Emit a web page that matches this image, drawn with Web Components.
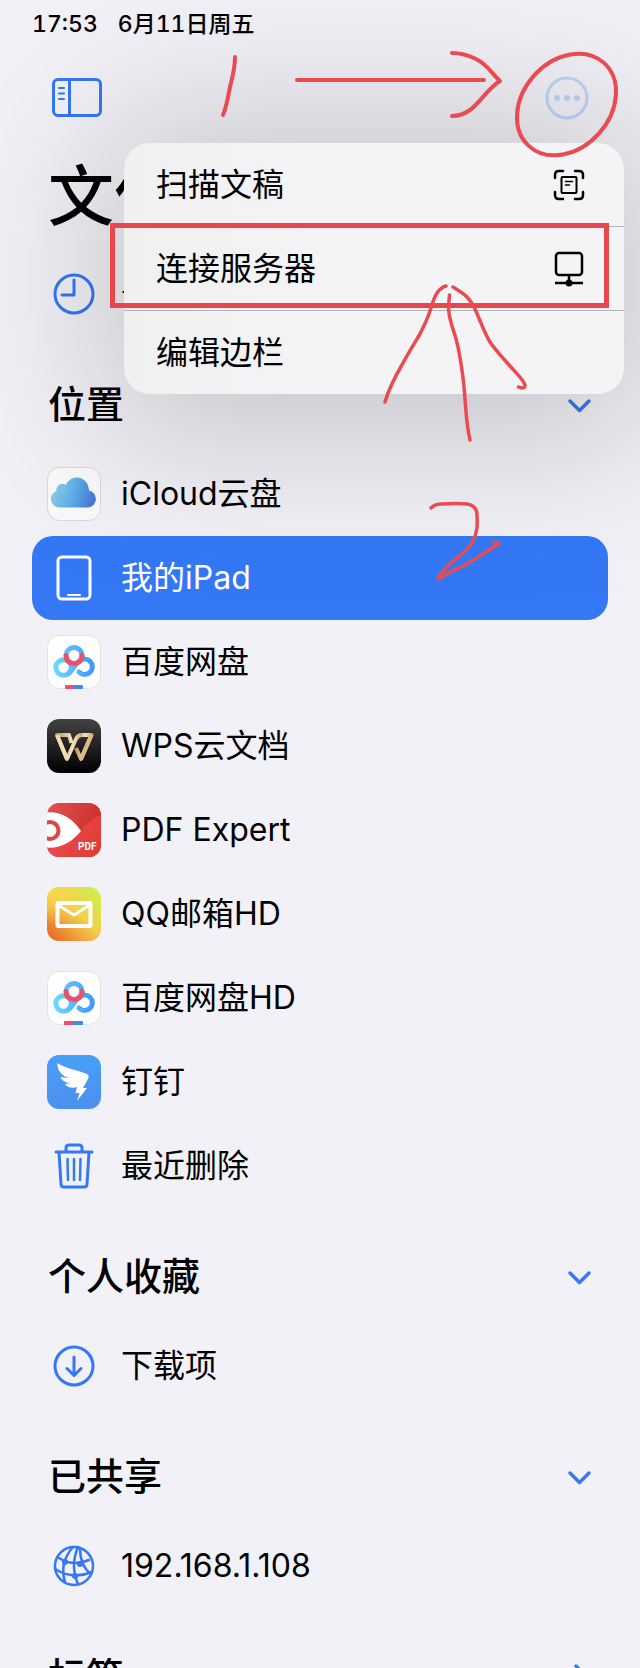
<!DOCTYPE html>
<html lang="zh-CN">
<head>
<meta charset="utf-8">
<meta name="viewport" content="width=device-width, initial-scale=1">
<title>文件</title>
<style>
  html, body { margin: 0; background: #f2f1f7; }
  body { font-family: Inter, "Noto Sans CJK SC", sans-serif; color: #000; }
</style>
</head>
<body>
<files-app></files-app>

<script>
const APP = 'width="54" height="54" viewBox="0 0 54 54"';
const LINE = 'width="56" height="56" viewBox="0 0 56 56" fill="none" stroke="currentColor" stroke-width="3" stroke-linecap="round" stroke-linejoin="round"';
const baidu = (id, bars) => `<svg ${APP}><defs>
  <linearGradient id="${id}" gradientUnits="userSpaceOnUse" x1="6" y1="0" x2="48" y2="0"><stop stop-color="#74d9fc"/><stop offset="1" stop-color="#3f93f8"/></linearGradient>
  <clipPath id="${id}c"><rect width="54" height="54" rx="12"/></clipPath></defs>
  <rect x=".5" y=".5" width="53" height="53" rx="12" fill="#fff" stroke="#e3e3e6"/>
  <g fill="none" stroke="url(#${id})" stroke-width="5" stroke-linecap="round">
    <circle cx="16.500" cy="32.500" r="7.700"/>
    <path d="M21.500 38.500C26 35 28 29 32 26.500A7.700 7.700 0 1 1 32 37"/>
    <circle cx="27" cy="20.500" r="8"/></g>
  <path d="M19 20.500a8 8 0 0 0 16 0" fill="none" stroke="#ee5069" stroke-width="5" stroke-linecap="round"/>
  <g clip-path="url(#${id}c)">${bars}</g></svg>`;

const ICONS = {
  clock: `<svg ${LINE}><circle cx="28" cy="28" r="19"/><path d="M28 14v15H16"/></svg>`,
  cloud: `<svg ${APP}><defs><linearGradient id="g" x1="0" y1=".6" x2="1" y2=".8"><stop stop-color="#8ccbe6"/><stop offset=".45" stop-color="#5fb2e9"/><stop offset="1" stop-color="#4670d8"/></linearGradient></defs>
    <rect x=".5" y=".5" width="53" height="53" rx="12" fill="#fafafa" stroke="#d9d9dc"/>
    <path d="M12.500 40.500A8.500 8.500 0 0 1 9.500 24C9.500 18 14.500 15.500 19 18C21 13 25 10.500 30 10.500C37 10.500 41.500 16 42 23.500A8.600 8.600 0 0 1 41 40.500Z" fill="url(#g)"/>
    <path d="M9.500 24C9.500 18 14.500 15.500 19 18C21 20 20 24 17 27C16 24 13 23 9.500 24Z" fill="#7cc4e4" opacity=".7"/></svg>`,
  ipad: `<svg ${LINE}><rect x="12" y="7" width="32" height="42" rx="4"/><path d="M22 45h12" stroke-width="2"/></svg>`,
  baidu: baidu('b', '<rect x="18" y="50" width="10" height="4" rx="1" fill="#ee5069"/><rect x="27" y="50" width="9" height="4" rx="1" fill="#3f8af5"/>'),
  baiduhd: baidu('h', '<rect x="17" y="50" width="10" height="4" fill="#ee5069"/><rect x="27" y="50" width="9" height="4" fill="#3f8af5"/>'),
  wps: `<svg ${APP}><defs><linearGradient id="k" x1="0" y1="0" x2="0" y2="1"><stop stop-color="#434343"/><stop offset="1" stop-color="#000"/></linearGradient>
    <linearGradient id="a"><stop stop-color="#bd9b63"/><stop offset=".6" stop-color="#f5e3be"/><stop offset="1" stop-color="#d0ae75"/></linearGradient></defs>
    <rect width="54" height="54" rx="12" fill="url(#k)"/>
    <g fill="none" stroke-width="4" stroke-linejoin="round"><path d="M24.500 24L22 16H10L20 40L29 20Q31 16 35 16" stroke="url(#a)"/><path d="M10 16L20 40" stroke="#f1deb8"/><path d="M29 29L34 40L44.500 16H35" stroke="url(#a)"/><path d="M34 40L44.500 16" stroke="#dabb84"/></g></svg>`,
  pdf: `<svg ${APP}><defs><linearGradient id="r" x1="0" y1="0" x2="1" y2=".3"><stop stop-color="#e2524f"/><stop offset="1" stop-color="#cb302b"/></linearGradient>
    <linearGradient id="s" x1="0" y1=".6" x2="1" y2="1"><stop stop-color="#e94a4c"/><stop offset="1" stop-color="#e03a35"/></linearGradient>
    <clipPath id="c"><rect width="54" height="54" rx="12"/></clipPath></defs>
    <g clip-path="url(#c)"><rect width="54" height="54" fill="url(#r)"/><path d="M0 54V40L33 28Q42 16 54 12V54Z" fill="url(#s)"/>
    <path d="M-2 9.500C14 8 25 15 34 28C25 39 14 46 -2 44.500Z" fill="#fff"/><circle cx="3" cy="27.500" r="8.500" fill="#fff" stroke="#de4645" stroke-width="4"/></g>
    <text x="31" y="47" font-family="Roboto, sans-serif" font-size="10" font-weight="700" fill="#fff">PDF</text></svg>`,
  mail: `<svg ${APP}><defs><linearGradient id="y" x1="1" y1="0" x2="0" y2="1"><stop stop-color="#c8f34c"/><stop offset=".45" stop-color="#f3d04a"/><stop offset="1" stop-color="#ea5e26"/></linearGradient>
    <radialGradient id="z" cx=".05" cy=".1" r=".6"><stop stop-color="#f9da4c"/><stop offset="1" stop-color="#f9da4c" stop-opacity="0"/></radialGradient></defs>
    <rect width="54" height="54" rx="12" fill="url(#y)"/><rect width="54" height="54" rx="12" fill="url(#z)"/>
    <g fill="none" stroke="#fff"><rect x="10.500" y="16" width="33" height="23" rx="1" stroke-width="4"/><path d="M11 18L27 28L43 18" stroke-width="3"/></g></svg>`,
  ding: `<svg ${APP}><defs><linearGradient id="d" x1="0" y1="0" x2="0" y2="1"><stop stop-color="#489ff8"/><stop offset="1" stop-color="#4c90ef"/></linearGradient></defs>
    <rect width="54" height="54" rx="12" fill="url(#d)"/>
    <path d="M10.500 8C17 13 30 15 40 19C42 20 42 22 41 24L36 33H40L30 46L32.500 38H28.500L30 32C25 34 20 32 18 29L25 28C19 28 15 26 13.500 22L23 23.500C15 21 10 16 10.500 8Z" fill="#fff"/></svg>`,
  trash: `<svg ${LINE}><path d="M10 14H46M13 14L15 46Q15 49 18 49H38Q41 49 41 46L43 14M20 13V10Q20 7 23 7H33Q36 7 36 10V13"/><path d="M21.500 21L22 42M28 21V42M34.500 21L34 42" stroke-width="2.500"/></svg>`,
  download: `<svg ${LINE}><circle cx="28" cy="28" r="19"/><path d="M28 19v18M21 30.500l7 7l7-7"/></svg>`,
  globe: `<svg ${LINE}><g stroke-width="2.500"><circle cx="28" cy="28" r="19"/><path d="M13 20Q27 29 43 22M9 31Q27 42 46 34M27 9Q13 25 19 44M32 9Q24 28 32 46M34 10Q34 28 45 36"/></g><g fill="currentColor" stroke="none"><circle cx="19" cy="24" r="3"/><circle cx="34" cy="26" r="3"/><circle cx="29" cy="38" r="3"/></g></svg>`,
  sidebar: `<svg width="52" height="42" viewBox="0 0 52 42" fill="none" stroke="currentColor" stroke-width="3"><rect x="2.500" y="2.500" width="47" height="36" rx="4.500"/><path d="M18.500 2v37"/><path d="M8 11h5M8 16.500h5M8 22h5" stroke-width="2" stroke-linecap="round"/></svg>`,
  more: `<svg width="44" height="44" viewBox="0 0 44 44"><circle cx="22" cy="22" r="20" fill="none" stroke="currentColor" stroke-width="3"/><g fill="currentColor"><circle cx="12" cy="22" r="3"/><circle cx="22" cy="22" r="3"/><circle cx="32" cy="22" r="3"/></g></svg>`,
  chevron: `<svg width="24" height="24" viewBox="0 0 24 24" fill="none" stroke="currentColor" stroke-width="3.500" stroke-linecap="round" stroke-linejoin="round"><path d="M3 7l9.500 9.500L22 7"/></svg>`,
  scan: `<svg width="34" height="34" viewBox="0 0 34 34" fill="none" stroke="currentColor" stroke-width="2.500" stroke-linecap="round"><path d="M3 10V7Q3 3 7 3H11M23 3H27Q31 3 31 7V10M31 24V27Q31 31 27 31H23M11 31H7Q3 31 3 27V24"/><rect x="9.500" y="9" width="15" height="16" rx="1" stroke-width="2"/><path d="M13.500 13.500h7M13.500 17h4" stroke-width="1.500"/></svg>`,
  server: `<svg width="34" height="34" viewBox="0 0 34 34" fill="none" stroke="currentColor" stroke-width="2.500"><rect x="4" y="1" width="26" height="22" rx="3"/><path d="M17 23v8M3 31h28"/><circle cx="17" cy="31" r="3.500" fill="currentColor" stroke="none"/></svg>`
};

const define = (name, html, setup) => {
  const template = document.createElement('template');
  template.innerHTML = html;
  customElements.define(name, class extends HTMLElement {
    constructor() {
      super();
      this.attachShadow({ mode: 'open' }).append(template.content.cloneNode(true));
    }
    connectedCallback() { if (setup) setup(this, this.shadowRoot); }
  });
};

define('files-icon', `<style>
  :host { display: inline-flex; flex: none; }
  svg { display: block; overflow: visible; }
</style>`, (el, root) => {
  root.querySelector('svg')?.remove();
  root.append(document.createRange().createContextualFragment(ICONS[el.getAttribute('name')]));
});

define('status-bar', `<style>
  :host { display: flex; align-items: center; gap: 20px; height: 48px; padding: 0 32px; font-size: 23px; line-height: 28px; font-weight: 500; font-variant-numeric: tabular-nums; }
</style><slot></slot>`);

define('tool-bar', `<style>
  :host { display: flex; align-items: center; justify-content: space-between; height: 100px; padding: 0 51px; }
  button { display: flex; padding: 0; border: 0; background: none; color: #3478f6; }
  .more { color: #bfd5f8; }
</style>
<button aria-label="边栏"><files-icon name="sidebar"></files-icon></button>
<button class="more" aria-label="更多"><files-icon name="more"></files-icon></button>`);

define('sidebar-row', `<style>
  :host { display: block; }
  a { display: flex; align-items: center; gap: 19px; height: 84px; box-sizing: border-box; margin: 0 32px; padding: 0 14px;
      border-radius: 21px; color: inherit; text-decoration: none; font-size: 32px; line-height: 40px; white-space: nowrap; }
  files-icon { color: #3478f6; width: 56px; justify-content: center; }
  :host([selected]) a { background: #3478f6; color: #fff; }
  :host([selected]) files-icon { color: #fff; }
</style><a href="#"><files-icon></files-icon><span><slot></slot></span></a>`, (el, root) => {
  const icon = root.querySelector('files-icon');
  const fresh = document.createElement('files-icon');
  fresh.setAttribute('name', el.getAttribute('icon'));
  icon.replaceWith(fresh);
  if (el.hasAttribute('selected')) root.querySelector('a').setAttribute('aria-current', 'page');
});

define('sidebar-section', `<style>
  :host { display: block; }
  h2 { margin: 0; font-size: 38px; line-height: 48px; font-weight: 500; }
  button { display: flex; align-items: center; justify-content: space-between; width: 100%; height: 116px; box-sizing: border-box;
           padding: 20px 49px 0 48px; border: 0; background: none; font: inherit; color: inherit; text-align: left; }
  files-icon { color: #3478f6; padding-top: 4px; }
  :host([collapsed]) files-icon { transform: rotate(-90deg); }
</style>
<h2><button><span></span><files-icon name="chevron"></files-icon></button></h2>
<slot></slot>`, (el, root) => {
  root.querySelector('span').textContent = el.getAttribute('heading');
  root.querySelector('button').setAttribute('aria-expanded', String(!el.hasAttribute('collapsed')));
});

define('menu-item', `<style>
  :host { display: block; }
  :host(:not(:last-of-type)) { border-bottom: 1px solid #b4b4b8; }
  button { display: flex; align-items: center; justify-content: space-between; width: 100%; height: 83px; padding: 0 38px 0 32px;
           border: 0; background: none; font: inherit; font-size: 32px; line-height: 40px; color: inherit; }
</style><button role="menuitem"><span><slot></slot></span><slot name="icon"></slot></button>`);

define('popup-menu', `<style>
  :host { display: block; }
  .shade { position: absolute; inset: -20px -20px -40px; background: rgba(0, 0, 0, .19); filter: blur(80px); pointer-events: none; }
  .panel { position: relative; border-radius: 26px; background: linear-gradient(90deg, #f0f0f1, #f4f4f6 40%); }
</style><div class="shade"></div><div class="panel"><slot></slot></div>`);

define('ink-notes', `<style>
  :host { display: block; pointer-events: none; }
  svg { display: block; }
</style>
<svg width="640" height="600" viewBox="0 0 640 600" fill="none" stroke="#e94b51" stroke-width="4" stroke-linecap="round" stroke-linejoin="round" aria-hidden="true">
  <path d="M235 57C235 72 231 80 229 92C227 103 226 108 223 115"/>
  <path d="M297 80H484"/>
  <path d="M452 53C462 53 472 57 476 59C488 65 492 74 500 81C488 88 480 103 470 110C463 115 458 116 452 116"/>
  <ellipse cx="566.500" cy="104.500" rx="56" ry="43.500" transform="rotate(-48 566.500 104.500)"/>
  <rect x="112.500" y="225.500" width="494" height="80" stroke="#e8484c" stroke-width="5" stroke-linejoin="miter"/>
  <path d="M446 286C442 287 439 290 437 293C433 299 432 306 430 311C427 320 424 326 420 334C414 344 409 352 403 363C396 375 389 388 385 402" stroke-width="3.500"/>
  <path d="M449.500 295C449 302 448 307 449 313C451 327 455 332 458 347C461 362 463 376 464 387C466 408 466 424 470 440" stroke-width="3.500"/>
  <path d="M453 287C458 290 463 293 467 297C471 301 473 305 475 309C480 320 484 332 490 342C496 351 503 358 510 366C516 373 523 379 525 385C525 389 522 388 518.500 387" stroke-width="3.500"/>
  <path d="M431 508C434 505 436 504 441 504C449 503.500 459 503 467 504C473 505 477 508 477 515C477.500 524 478 532 472 543C463 557 444 564 438 579C446 575 448 572 457 569C473 562 484 552 499 544C498 542 496 542 494 543" stroke-width="3.500"/>
</svg>`);

define('files-app', `<style>
  :host { display: block; position: relative; height: 100vh; overflow: hidden; background: #f2f1f7; }
  h1 { margin: 0; height: 104px; box-sizing: border-box; padding: 0 48px; font-size: 66px; line-height: 96px; font-weight: 500; }
  popup-menu { position: absolute; top: 143px; right: 16px; width: min(500px, 80%); }
  ink-notes { position: absolute; top: 0; right: 0; }
</style>
<status-bar><time>17:53</time><span>6月11日周五</span></status-bar>
<tool-bar></tool-bar>
<h1>文件</h1>
<nav>
  <sidebar-row icon="clock">最近项目</sidebar-row>
  <sidebar-section heading="位置">
    <sidebar-row icon="cloud">iCloud云盘</sidebar-row>
    <sidebar-row icon="ipad" selected>我的iPad</sidebar-row>
    <sidebar-row icon="baidu">百度网盘</sidebar-row>
    <sidebar-row icon="wps">WPS云文档</sidebar-row>
    <sidebar-row icon="pdf">PDF Expert</sidebar-row>
    <sidebar-row icon="mail">QQ邮箱HD</sidebar-row>
    <sidebar-row icon="baiduhd">百度网盘HD</sidebar-row>
    <sidebar-row icon="ding">钉钉</sidebar-row>
    <sidebar-row icon="trash">最近删除</sidebar-row>
  </sidebar-section>
  <sidebar-section heading="个人收藏">
    <sidebar-row icon="download">下载项</sidebar-row>
  </sidebar-section>
  <sidebar-section heading="已共享">
    <sidebar-row icon="globe">192.168.1.108</sidebar-row>
  </sidebar-section>
  <sidebar-section heading="标签" collapsed></sidebar-section>
</nav>
<popup-menu role="menu">
  <menu-item>扫描文稿<files-icon slot="icon" name="scan"></files-icon></menu-item>
  <menu-item>连接服务器<files-icon slot="icon" name="server"></files-icon></menu-item>
  <menu-item>编辑边栏</menu-item>
</popup-menu>
<ink-notes></ink-notes>`);
</script>
</body>
</html>
